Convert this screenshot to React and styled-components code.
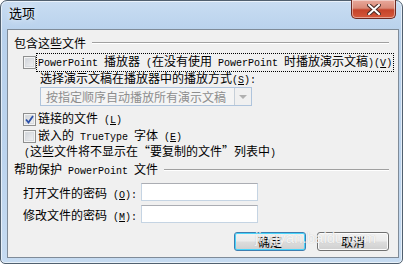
import React from 'react';
import styled, { createGlobalStyle } from 'styled-components';

const GlobalStyle = createGlobalStyle`
  html, body {
    margin: 0;
    padding: 0;
    background: #ffffff;
  }
  body {
    font-family: "Noto Sans CJK SC", "Liberation Sans", sans-serif;
    font-size: 12px;
    color: #000;
  }
`;

const Window = styled.div`
  width: 403px;
  height: 264px;
  box-sizing: border-box;
  border: 1px solid #51606f;
  border-radius: 7px 7px 5px 5px;
  background: linear-gradient(180deg, #c9ddf2 0%, #b8d1ec 12%, #bcd4ee 60%, #c6dbf1 100%);
  box-shadow: inset 0 0 0 1px rgba(255, 255, 255, 0.6);
  display: flex;
  flex-direction: column;
  padding: 0 3px 5px 6px;
`;

const TitleBar = styled.div`
  height: 28px;
  display: flex;
  align-items: flex-start;
  justify-content: space-between;
`;

const Title = styled.div`
  padding: 4px 0 0 2px;
  font-size: 13px;
  line-height: 16px;
  color: #000;
  text-shadow: 0 0 6px rgba(255, 255, 255, 0.9);
`;

const CloseButton = styled.div`
  width: 45px;
  height: 19px;
  margin-top: -1px;
  margin-right: 3px;
  box-sizing: border-box;
  border: 1px solid #6d2a22;
  border-top: none;
  border-radius: 0 0 5px 5px;
  background: linear-gradient(180deg, #e9a99b 0%, #d98a78 45%, #c5432a 55%, #d5593c 100%);
  box-shadow: inset 0 0 0 1px rgba(255, 255, 255, 0.45);
  display: flex;
  align-items: center;
  justify-content: center;
`;

const Client = styled.div`
  flex: 1;
  box-sizing: border-box;
  border: 1px solid #7f8b98;
  background: #f0f0f0;
  padding: 6px 8px 0 6px;
  display: flex;
  flex-direction: column;
  position: relative;
`;

const GroupHead = styled.div`
  display: flex;
  align-items: center;
  height: 14px;
  line-height: 14px;
  gap: 6px;
  margin-top: ${p => p.top || 0}px;
  &::after {
    content: "";
    flex: 1;
    height: 1px;
    background: #a0a0a0;
    border-bottom: 1px solid #ffffff;
    margin-right: 1px;
  }
`;

const Mono = styled.span`
  font-family: "Liberation Mono", "DejaVu Sans Mono", monospace;
  font-size: 10px;
`;

const Key = styled.span`
  text-decoration: underline;
  font-family: "Liberation Mono", monospace;
  font-size: 10px;
`;

const CheckRow = styled.div`
  display: flex;
  align-items: center;
  height: 14px;
  margin-top: ${p => p.top}px;
  padding-left: 9px;
  gap: 1px;
`;

const Box = styled.div`
  width: 13px;
  height: 13px;
  box-sizing: border-box;
  border: 1px solid #8e8f8f;
  background: linear-gradient(135deg, #cbcfd5 0%, #f6f6f6 100%);
  box-shadow: inset 0 0 0 1px #f4f4f4, inset 0 0 0 2px #d9dce0;
  display: flex;
  align-items: center;
  justify-content: center;
  flex: none;
`;

const Label = styled.span`
  line-height: 14px;
  white-space: nowrap;
  padding: 0 1px;
  ${p => p.focus && `outline: 1px dotted #000; outline-offset: 0px;`}
`;

const Line = styled.div`
  line-height: 14px;
  height: 14px;
  white-space: nowrap;
  margin-top: ${p => p.top}px;
  padding-left: ${p => p.indent}px;
`;

const Combo = styled.div`
  margin: 2px 0 0 26px;
  width: 212px;
  height: 19px;
  box-sizing: border-box;
  border: 1px solid #afc4dc;
  background: #f4f4f4;
  display: flex;
  align-items: center;
  justify-content: space-between;
  padding-left: 5px;
  color: #8d8d8d;
  font-size: 12px;
`;

const ComboArrow = styled.div`
  width: 17px;
  height: 17px;
  box-sizing: border-box;
  border-left: 1px solid #c6cfd8;
  background: #f0f0f0;
  display: flex;
  align-items: center;
  justify-content: center;
  &::after {
    content: "";
    border-left: 4px solid transparent;
    border-right: 4px solid transparent;
    border-top: 4px solid #b0b0b0;
  }
`;

const FieldRow = styled.div`
  display: flex;
  align-items: center;
  height: 18px;
  margin-top: ${p => p.top}px;
  padding-left: 9px;
`;

const FieldLabel = styled.span`
  width: 118px;
  white-space: nowrap;
`;

const Input = styled.div`
  width: 117px;
  height: 18px;
  box-sizing: border-box;
  border: 1px solid #c5d4e3;
  border-top-color: #abadb3;
  background: #ffffff;
`;

const Buttons = styled.div`
  display: flex;
  justify-content: flex-end;
  gap: 11px;
  margin-top: 9px;
  padding-right: 1px;
`;

const Button = styled.div`
  width: 72px;
  height: 19px;
  box-sizing: border-box;
  border: 1px solid ${p => (p.primary ? '#3c7fb1' : '#707070')};
  border-radius: 3px;
  background: linear-gradient(180deg, #f2f2f2 0%, #ebebeb 48%, #dddddd 52%, #cfcfcf 100%);
  box-shadow: inset 0 0 0 1px ${p => (p.primary ? '#48d4fb' : '#fcfcfc')};
  display: flex;
  align-items: center;
  justify-content: center;
  line-height: 14px;
`;

const Watermark = styled.div`
  position: absolute;
  left: 247px;
  top: 199px;
  font-family: "Liberation Sans", sans-serif;
  font-size: 15px;
  color: rgba(255, 255, 255, 0.8);
  text-shadow: 0 0 1px rgba(150, 150, 150, 0.5);
  pointer-events: none;
`;

const CloseIcon = () => (
  <svg width="14" height="11" viewBox="0 0 14 11">
    <path d="M2 1 L12 10 M12 1 L2 10" stroke="#4a2a25" strokeWidth="4" strokeLinecap="square" />
    <path d="M2 1 L12 10 M12 1 L2 10" stroke="#ffffff" strokeWidth="2" strokeLinecap="square" />
  </svg>
);

const Check = () => (
  <svg width="9" height="9" viewBox="0 0 9 9">
    <path d="M1 4.5 L3.5 7.5 L8 1" fill="none" stroke="#2a4fa8" strokeWidth="1.8" />
  </svg>
);

class App extends React.Component {
  render() {
    return (
      <>
        <GlobalStyle />
        <Window>
          <TitleBar>
            <Title>选项</Title>
            <CloseButton>
              <CloseIcon />
            </CloseButton>
          </TitleBar>
          <Client>
            <GroupHead>包含这些文件</GroupHead>
            <CheckRow top={5}>
              <Box />
              <Label focus>
                <Mono>PowerPoint </Mono>播放器<Mono> (</Mono>在没有使用<Mono> PowerPoint </Mono>时播放演示文稿<Mono>)(</Mono><Key>V</Key><Mono>)</Mono>
              </Label>
            </CheckRow>
            <Line top={2} indent={26}>
              选择演示文稿在播放器中的播放方式<Mono>(</Mono><Key>S</Key><Mono>):</Mono>
            </Line>
            <Combo>
              按指定顺序自动播放所有演示文稿
              <ComboArrow />
            </Combo>
            <CheckRow top={6}>
              <Box>
                <Check />
              </Box>
              <Label>
                链接的文件<Mono> (</Mono><Key>L</Key><Mono>)</Mono>
              </Label>
            </CheckRow>
            <CheckRow top={3}>
              <Box />
              <Label>
                嵌入的<Mono> TrueType </Mono>字体<Mono> (</Mono><Key>E</Key><Mono>)</Mono>
              </Label>
            </CheckRow>
            <Line top={1} indent={10}>
              <Mono>(</Mono>这些文件将不显示在“要复制的文件”列表中<Mono>)</Mono>
            </Line>
            <GroupHead top={5}>
              <span>
                帮助保护<Mono> PowerPoint </Mono>文件
              </span>
            </GroupHead>
            <FieldRow top={6}>
              <FieldLabel>
                打开文件的密码<Mono> (</Mono><Key>O</Key><Mono>):</Mono>
              </FieldLabel>
              <Input />
            </FieldRow>
            <FieldRow top={4}>
              <FieldLabel>
                修改文件的密码<Mono> (</Mono><Key>M</Key><Mono>):</Mono>
              </FieldLabel>
              <Input />
            </FieldRow>
            <Buttons>
              <Button primary>确定</Button>
              <Button>取消</Button>
            </Buttons>
            <Watermark>jingyan.baidu.com</Watermark>
          </Client>
        </Window>
      </>
    );
  }
}

export default App;
